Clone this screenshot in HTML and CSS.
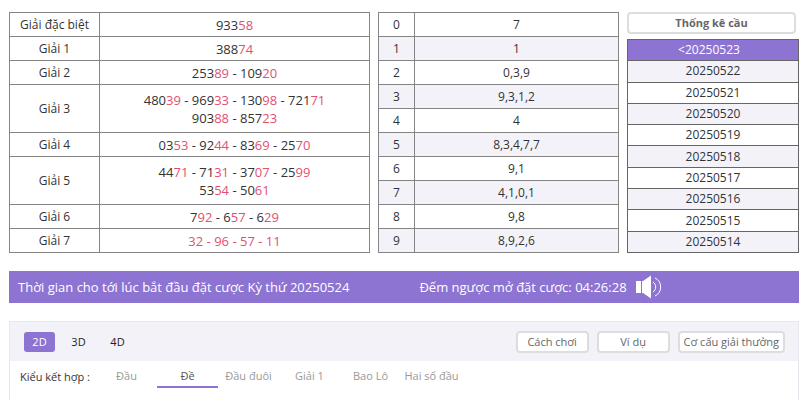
FILE: index.html
```html
<!DOCTYPE html>
<html lang="vi">
<head>
  <meta charset="UTF-8">
  <meta name="viewport" content="width=device-width, initial-scale=1.0">
  <title>Kết quả xổ số</title>
  <link rel="stylesheet" href="styles.css">
</head>
<body>
  <main class="page">
    <section class="results">
      <table class="prizes">
        <tr><th>Giải đặc biệt</th><td>933<em>58</em></td></tr>
        <tr><th>Giải 1</th><td>388<em>74</em></td></tr>
        <tr><th>Giải 2</th><td>253<em>89</em> - 109<em>20</em></td></tr>
        <tr class="double"><th>Giải 3</th><td>480<em>39</em> - 969<em>33</em> - 130<em>98</em> - 721<em>71</em><br>903<em>88</em> - 857<em>23</em></td></tr>
        <tr><th>Giải 4</th><td>03<em>53</em> - 92<em>44</em> - 83<em>69</em> - 25<em>70</em></td></tr>
        <tr class="double"><th>Giải 5</th><td>44<em>71</em> - 71<em>31</em> - 37<em>07</em> - 25<em>99</em><br>53<em>54</em> - 50<em>61</em></td></tr>
        <tr><th>Giải 6</th><td>7<em>92</em> - 6<em>57</em> - 6<em>29</em></td></tr>
        <tr><th>Giải 7</th><td><em>32 - 96 - 57 - 11</em></td></tr>
      </table>

      <table class="heads striped">
        <tr><th>0</th><td>7</td></tr>
        <tr><th>1</th><td>1</td></tr>
        <tr><th>2</th><td>0,3,9</td></tr>
        <tr><th>3</th><td>9,3,1,2</td></tr>
        <tr><th>4</th><td>4</td></tr>
        <tr><th>5</th><td>8,3,4,7,7</td></tr>
        <tr><th>6</th><td>9,1</td></tr>
        <tr><th>7</th><td>4,1,0,1</td></tr>
        <tr><th>8</th><td>9,8</td></tr>
        <tr><th>9</th><td>8,9,2,6</td></tr>
      </table>

      <div class="history">
        <button type="button" class="btn btn-stats">Thống kê cầu</button>
        <table class="dates striped">
          <tr class="current"><td>&lt;20250523</td></tr>
          <tr><td>20250522</td></tr>
          <tr><td>20250521</td></tr>
          <tr><td>20250520</td></tr>
          <tr><td>20250519</td></tr>
          <tr><td>20250518</td></tr>
          <tr><td>20250517</td></tr>
          <tr><td>20250516</td></tr>
          <tr><td>20250515</td></tr>
          <tr><td>20250514</td></tr>
        </table>
      </div>
    </section>

    <section class="countdown">
      <p class="period">Thời gian cho tới lúc bắt đầu đặt cược Kỳ thứ 20250524</p>
      <p class="timer">Đếm ngược mở đặt cược: 04:26:28</p>
      <svg class="speaker" viewBox="0 0 28 24" width="28" height="24" aria-hidden="true">
        <path d="M1 6h5v12H1zM7 6h1l8-5.500v23L8 18H7z" fill="#fff"/>
        <path d="M18 7a6 6 0 0 1 0 10M20 3a10 10 0 0 1 0 18" fill="none" stroke="#fff" stroke-width="1"/>
      </svg>
    </section>

    <section class="betting">
      <div class="toolbar">
        <div class="modes">
          <button type="button" class="mode active">2D</button>
          <button type="button" class="mode">3D</button>
          <button type="button" class="mode">4D</button>
        </div>
        <div class="help">
          <button type="button" class="btn">Cách chơi</button>
          <button type="button" class="btn">Ví dụ</button>
          <button type="button" class="btn">Cơ cấu giải thưởng</button>
        </div>
      </div>
      <div class="types">
        <span class="types-label">Kiểu kết hợp :</span>
        <button type="button" class="type">Đầu</button>
        <button type="button" class="type active">Đề</button>
        <button type="button" class="type">Đầu đuôi</button>
        <button type="button" class="type">Giải 1</button>
        <button type="button" class="type">Bao Lô</button>
        <button type="button" class="type">Hai số đầu</button>
      </div>
    </section>
  </main>
</body>
</html>
```
FILE: styles.css
```css
* {
  box-sizing: border-box;
}
body {
  margin: 0;
  background: #fff;
  color: #333;
  font-family: "Open Sans", "Noto Sans", sans-serif;
  font-size: 12px;
}
button {
  font-family: inherit;
  cursor: pointer;
}
.page {
  padding: 12px 1px 0 9px;
}

/* results */
.results {
  display: grid;
  grid-template-columns: 361fr 241fr 172fr;
  gap: 8px;
}
table {
  width: 100%;
  border-collapse: collapse;
  table-layout: fixed;
}
th, td {
  height: 24px;
  padding: 0;
  border: 1px solid #858585;
  font-weight: normal;
  text-align: center;
  line-height: 18px;
}
em {
  font-style: normal;
  color: #e2506f;
}
.prizes th {
  width: 25%;
}
.prizes td {
  font-size: 13px;
}
.prizes .double td {
  height: 48px;
}
.heads th {
  width: 36px;
}
.striped tr:nth-child(even) {
  background: #f3f2f9;
}
.history {
  display: flex;
  flex-direction: column;
  gap: 5px;
}
.btn {
  min-width: 73px;
  height: 22px;
  padding: 0 4px;
  border: 2px solid #ddd;
  border-radius: 4px;
  background: #fff;
  color: #666;
  font-size: 11px;
  line-height: 16px;
}
.btn-stats {
  margin-right: 3px;
  font-weight: bold;
}
.dates {
  flex: 1;
}
.dates td {
  height: 21px;
  border-color: #666;
}
.dates .current {
  background: #8d73d2;
  color: #fff;
}
.dates .current td {
  padding-right: 8px;
}

/* countdown bar */
.countdown {
  display: flex;
  align-items: center;
  height: 32px;
  margin-top: 18px;
  padding: 0 9px;
  background: #8d73d2;
  color: #fff;
  font-size: 13px;
}
.countdown p {
  margin: 0;
}
.period {
  width: 52%;
}
.speaker {
  margin-left: 8px;
}

/* betting panel */
.betting {
  margin-top: 18px;
  border: 1px solid #e8e7f0;
  border-bottom: 0;
  min-height: 79px;
}
.toolbar {
  display: flex;
  align-items: center;
  justify-content: space-between;
  height: 39px;
  padding: 0 13px 0 14px;
  background: #f3f2f9;
}
.modes {
  display: flex;
  gap: 8px;
}
.mode {
  width: 31px;
  height: 20px;
  padding: 0;
  border: 0;
  border-radius: 3px;
  background: none;
  color: #222;
  font-size: 11px;
}
.mode.active {
  background: #8d73d2;
  color: #fff;
}
.help {
  display: flex;
  gap: 8px;
}
.types {
  display: flex;
  align-items: center;
  height: 30px;
  padding-left: 10px;
}
.types-label {
  width: 76px;
  font-size: 11px;
  white-space: nowrap;
}
.type {
  width: 61px;
  height: 24px;
  padding: 0;
  border: 0;
  border-bottom: 2px solid transparent;
  background: none;
  color: #999;
  font-size: 11px;
  white-space: nowrap;
}
.type.active {
  border-color: #8d73d2;
  color: #555;
}
```
